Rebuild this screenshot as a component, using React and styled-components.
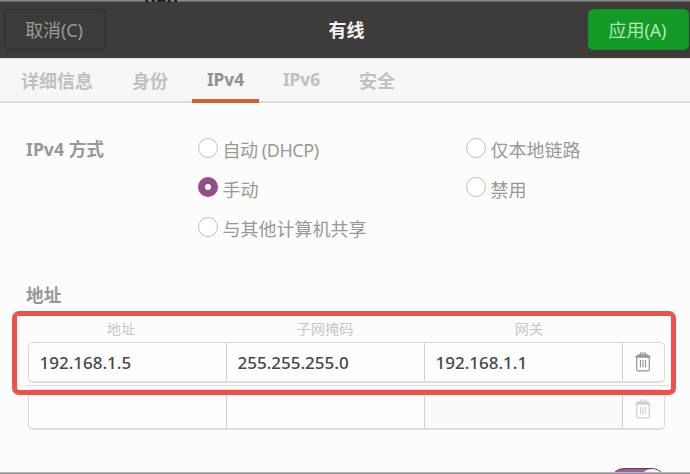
import React from "react";
import styled, { createGlobalStyle } from "styled-components";

const GlobalStyle = createGlobalStyle`
  *, *::before, *::after { box-sizing: border-box; }
  body {
    margin: 0;
    font-family: "Noto Sans", "Noto Sans CJK SC", sans-serif;
    font-size: 18px;
    background: #fcfcfc;
  }
`;

const Window = styled.div`
  position: relative;
  display: flex;
  flex-direction: column;
  width: 690px;
  height: 474px;
  overflow: hidden;
  background: #fcfcfc;
`;

const Backdrop = styled.div`
  height: 2px;
  flex: none;
  overflow: hidden;
  background: linear-gradient(#8b8a87 50%, #666562 50%);
`;

const ClippedTitle = styled.div`
  margin: -14px 0 0 144px;
  font-size: 18px;
  line-height: 18px;
  font-weight: 700;
  color: #1c1b1a;
`;

const HeaderBar = styled.header`
  display: grid;
  grid-template-columns: 1fr auto 1fr;
  align-items: start;
  flex: none;
  height: 56px;
  padding: 7px 1px 0 4px;
  background: #3e3c3a;
`;

const HeaderButton = styled.button`
  justify-self: ${(p) => (p.$primary ? "end" : "start")};
  width: ${(p) => (p.$primary ? "101px" : "102px")};
  height: 41px;
  padding: 0 2px 0 0;
  border: ${(p) => (p.$primary ? "1px solid #168f29" : "1.5px solid #302e2d")};
  border-radius: 5px;
  background: ${(p) => (p.$primary ? "#129c27" : "#3d3b39")};
  color: ${(p) => (p.$primary ? "#b5e6b9" : "#9a9895")};
  font: inherit;
  line-height: 26px;
  letter-spacing: -0.1px;
`;

const Title = styled.h1`
  margin: 0;
  padding: 8px 0 0 0;
  font-size: 18px;
  line-height: 26px;
  font-weight: 700;
  color: #f4f3f1;
`;

const TabBar = styled.nav`
  display: flex;
  flex: none;
  height: 45px;
  padding-left: 12px;
  background: #f6f6f6;
  border-top: 1px solid #dededd;
  border-bottom: 2px solid #dcdcdb;
`;

const Tab = styled.div`
  width: ${(p) => p.$width}px;
  height: 44px;
  padding-top: ${(p) => (p.$latin ? 8 : 9)}px;
  margin-right: ${(p) => p.$gap || 0}px;
  border-bottom: 4px solid ${(p) => (p.$active ? "#d8622f" : "transparent")};
  color: ${(p) => (p.$active ? "#92928f" : "#c1c1be")};
  font-size: ${(p) => (p.$latin ? "17.3px" : "18px")};
  line-height: 26px;
  font-weight: 700;
  text-align: center;
`;

const Methods = styled.section`
  display: grid;
  grid-template-columns: 172px 268px 1fr;
  grid-auto-rows: 39.7px;
  flex: none;
  height: 165px;
  padding: 27px 0 0 26px;
`;

const SectionLabel = styled.h2`
  margin: 0;
  font-size: 17.7px;
  line-height: 39px;
  font-weight: 700;
  color: #969a94;
`;

const Choice = styled.label`
  grid-column: ${(p) => p.$column};
  grid-row: ${(p) => p.$row};
  display: flex;
  gap: 4.5px;
  height: 39px;
  color: #969b95;
  line-height: 40px;
  letter-spacing: ${(p) => p.$spacing || 0}px;
  white-space: nowrap;
`;

const RadioMark = styled.span`
  flex: none;
  width: 20px;
  height: 20px;
  margin-top: 7.5px;
  border-radius: 50%;
  border: ${(p) => (p.$checked ? "7px solid #91508b" : "1.5px solid #bebebc")};
  background: #fff;
`;

const Addresses = styled.section`
  flex: none;
  height: 206px;
  padding: 7px 0 0 26px;
`;

const AddressHeading = styled.h2`
  margin: 0;
  height: 45px;
  font-size: 17.7px;
  line-height: 40px;
  font-weight: 700;
  color: #969a94;
`;

const ColumnTitles = styled.div`
  display: grid;
  grid-template-columns: repeat(3, 198px);
  height: 22px;
  padding-left: 2px;
  color: #c5c9c3;
  font-size: 14.2px;
  line-height: 18px;
  text-align: center;
`;

const ColumnTitle = styled.span`
  padding-right: ${(p) => p.$right || 0}px;
  padding-left: ${(p) => p.$left || 0}px;
`;

const EntryRow = styled.div`
  display: grid;
  grid-template-columns: 198px 198px 198px 1fr;
  width: 637px;
  height: 41px;
  margin-left: 2px;
  border: 1px solid #dadad9;
  border-bottom: 2px solid #dededd;
  border-radius: 5px;
  background: #fdfdfd;
`;

const EntryCell = styled.div`
  display: flex;
  align-items: center;
  padding: 1px 0 0 10.5px;
  border-right: 1px solid #d2d2d1;
  background: ${(p) => (p.$dim ? "#fafafa" : "transparent")};
  color: #484845;
  font-size: 17px;
  font-weight: 500;
`;

const DeleteButton = styled.button`
  display: flex;
  align-items: center;
  justify-content: center;
  padding: 0 2px 0 0;
  border: 0;
  background: transparent;
  color: ${(p) => (p.$disabled ? "#d0d0cf" : "#969694")};
`;

const Separator = styled.div`
  width: 642px;
  height: 1px;
  margin: 2px 0 3px;
  background: #dededd;
`;

const Highlight = styled.div`
  position: absolute;
  left: 11.5px;
  top: 311px;
  width: 664.5px;
  height: 84px;
  border: 5px solid #ef504b;
  border-top-color: #e75450;
  border-radius: 7px;
  pointer-events: none;
`;

const SwitchTrack = styled.div`
  width: 56px;
  height: 28px;
  flex: none;
  margin: -6px 0 0 610px;
  border: 1px solid #61375d;
  border-radius: 14px;
  background: #98649a;
  display: flex;
  justify-content: flex-end;
`;

const SwitchKnob = styled.div`
  width: 26px;
  height: 26px;
  border-radius: 50%;
  background: #f5f3f4;
`;

const BottomEdge = styled.div`
  position: absolute;
  left: 0;
  right: 0;
  bottom: 0;
  height: 2px;
  background: linear-gradient(#bdbdbc 50%, #858584 50%);
`;

function TrashIcon() {
  return (
    <svg width="16" height="20" viewBox="0 0 16 20" fill="none">
      <path d="M5.5 2.5V1h5v1.5" stroke="currentColor" strokeWidth="1.2" />
      <path d="M3.5 2.2h9L15.6 4.6v1.2H.4V4.6z" fill="currentColor" />
      <path
        d="M1.7 5.5v12c0 1 .5 1.4 1.3 1.4h10c.8 0 1.3-.4 1.3-1.4v-12"
        stroke="currentColor"
        strokeWidth="1.2"
      />
      <path d="M5.5 8v7.2M8 8v7.2M10.5 8v7.2" stroke="currentColor" strokeWidth="1.1" />
    </svg>
  );
}

const choices = [
  { label: "自动 (DHCP)", column: 2, row: 1, spacing: -0.45 },
  { label: "手动", column: 2, row: 2, checked: true },
  { label: "与其他计算机共享", column: 2, row: 3 },
  { label: "仅本地链路", column: 3, row: 1 },
  { label: "禁用", column: 3, row: 2 },
];

export default function App() {
  return (
    <>
      <GlobalStyle />
      <Window>
        <Backdrop>
          <ClippedTitle>nan</ClippedTitle>
        </Backdrop>
        <HeaderBar>
          <HeaderButton>取消(C)</HeaderButton>
          <Title>有线</Title>
          <HeaderButton $primary>应用(A)</HeaderButton>
        </HeaderBar>
        <TabBar>
          <Tab $width={90} $gap={15}>详细信息</Tab>
          <Tab $width={66} $gap={9}>身份</Tab>
          <Tab $width={67} $gap={9} $latin $active>IPv4</Tab>
          <Tab $width={67} $gap={9} $latin>IPv6</Tab>
          <Tab $width={66}>安全</Tab>
        </TabBar>
        <Methods>
          <SectionLabel>IPv4 方式</SectionLabel>
          {choices.map((c) => (
            <Choice key={c.label} $column={c.column} $row={c.row} $spacing={c.spacing}>
              <RadioMark $checked={c.checked} />
              {c.label}
            </Choice>
          ))}
        </Methods>
        <Addresses>
          <AddressHeading>地址</AddressHeading>
          <ColumnTitles>
            <ColumnTitle $right={12}>地址</ColumnTitle>
            <ColumnTitle>子网掩码</ColumnTitle>
            <ColumnTitle $left={12}>网关</ColumnTitle>
          </ColumnTitles>
          <EntryRow>
            <EntryCell>192.168.1.5</EntryCell>
            <EntryCell>255.255.255.0</EntryCell>
            <EntryCell>192.168.1.1</EntryCell>
            <DeleteButton aria-label="删除"><TrashIcon /></DeleteButton>
          </EntryRow>
          <Separator />
          <EntryRow>
            <EntryCell />
            <EntryCell />
            <EntryCell $dim />
            <DeleteButton $disabled aria-label="删除"><TrashIcon /></DeleteButton>
          </EntryRow>
        </Addresses>
        <SwitchTrack><SwitchKnob /></SwitchTrack>
        <BottomEdge />
        <Highlight />
      </Window>
    </>
  );
}
